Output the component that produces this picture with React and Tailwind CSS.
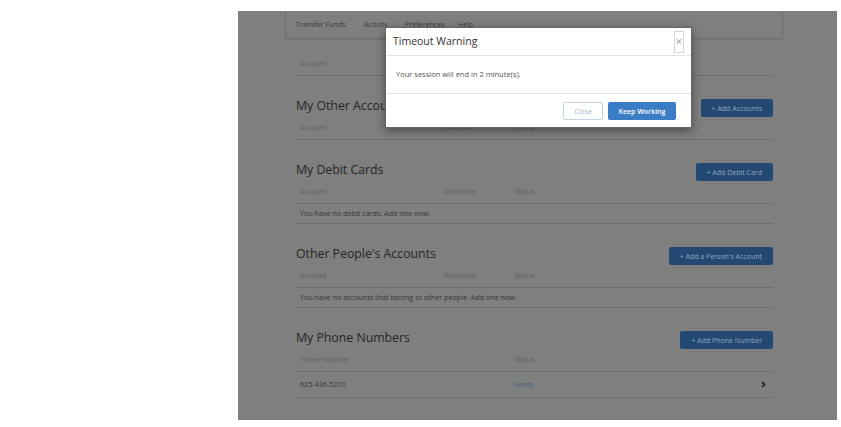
import React from "react";

function AddBtn({ children }) {
  return (
    <button className="h-[18px] self-end rounded-[2px] bg-[#234872] px-[11px] text-[7px] leading-none text-[#95a5bb]">
      {children}
    </button>
  );
}

function HeadingRow({ title, btn }) {
  return (
    <div className="flex h-[20px] justify-between">
      <h2 className="pl-px text-[12.3px] leading-[17px] text-[#262626]">{title}</h2>
      <AddBtn>{btn}</AddBtn>
    </div>
  );
}

function ColHeader({ cols }) {
  return (
    <div className="flex h-[23px] items-center border-b border-[#6c6c6c] text-[7px] text-[#5e5e5e]">
      <div className="w-[148px] pl-[5px]">{cols[0]}</div>
      <div className="w-[71px]">{cols[1]}</div>
      <div>{cols[2]}</div>
    </div>
  );
}

function EmptyRow({ text }) {
  return (
    <div className="flex h-[20px] items-center border-b border-[#6c6c6c] pl-[5px] text-[7.2px] text-[#353535]">
      {text}
    </div>
  );
}

export default function App() {
  return (
    <div className="min-h-screen bg-white font-['Open_Sans','Noto_Sans',sans-serif]">
      <div className="ml-[238px] pt-[11px]">
        <div className="relative h-[409px] w-[599px] overflow-hidden bg-[#7f7f7f]">
          {/* nav card */}
          <div className="ml-[47px] flex h-[28px] w-[498px] items-center border-x border-b border-[#6e6e6e] pl-[10px] text-[7.1px] text-[#3a3a3a] shadow-[0_1px_1px_rgba(0,0,0,0.08)]">
            <span className="w-[68px]">Transfer Funds</span>
            <span className="w-[41px]">Activity</span>
            <span className="w-[53px]">Preferences</span>
            <span>Help</span>
          </div>

          <div className="ml-[57px] w-[478px]">
            <div className="mt-[14px]">
              <ColHeader cols={["Account", "Nickname", "Status"]} />
            </div>

            <section className="mt-[21px]">
              <HeadingRow title="My Other Accounts" btn="+ Add Accounts" />
              <ColHeader cols={["Account", "Nickname", "Status"]} />
            </section>

            <section className="mt-[21px]">
              <HeadingRow title="My Debit Cards" btn="+ Add Debit Card" />
              <ColHeader cols={["Account", "Nickname", "Status"]} />
              <EmptyRow text="You have no debit cards. Add one now." />
            </section>

            <section className="mt-[21px]">
              <HeadingRow title="Other People's Accounts" btn="+ Add a Person's Account" />
              <ColHeader cols={["Account", "Nickname", "Status"]} />
              <EmptyRow text="You have no accounts that belong to other people. Add one now." />
            </section>

            <section className="mt-[21px]">
              <HeadingRow title="My Phone Numbers" btn="+ Add Phone Number" />
              <div className="flex h-[23px] items-center border-b border-[#6c6c6c] text-[7px] text-[#5e5e5e]">
                <div className="w-[219px] pl-[5px]">Phone Number</div>
                <div>Status</div>
              </div>
              <div className="flex h-[26px] items-center border-b border-[#6c6c6c] text-[7.2px]">
                <div className="w-[219px] pl-[5px] text-[#353535]">625-436-5210</div>
                <div className="flex-1 text-[#44587a]">Verify</div>
                <svg className="mr-[7px]" width="5" height="7" viewBox="0 0 5 7">
                  <path d="M1 1l2.6 2.5L1 6" stroke="#1f1f1f" strokeWidth="1.6" fill="none" />
                </svg>
              </div>
            </section>
          </div>

          {/* modal */}
          <div className="absolute left-[147px] top-[16px] flex h-[101px] w-[307px] flex-col border border-[#666] bg-white shadow-[0_3px_9px_rgba(0,0,0,0.4)]">
            <div className="flex h-[28px] items-center justify-between border-b border-[#e5e5e5] pl-[7px] pr-[7px]">
              <h3 className="text-[10.5px] text-[#333]">Timeout Warning</h3>
              <button className="flex h-[22px] w-[10px] items-center justify-center border border-[#c8d8eb] text-[12px] leading-none text-[#9a9a9a]">
                ×
              </button>
            </div>
            <div className="flex h-[37px] items-center pl-[10px] text-[7.5px] text-[#555]">
              Your session will end in 2 minute(s).
            </div>
            <div className="flex flex-1 items-start justify-end gap-[5px] border-t border-[#e5e5e5] pr-[15px] pt-[8px]">
              <button className="h-[18px] w-[40px] rounded-[2px] border border-[#c3d4e7] bg-white text-[7px] leading-none text-[#a3b3c4]">
                Close
              </button>
              <button className="h-[18px] w-[68px] rounded-[2px] bg-[#3b7dc4] text-[7px] font-semibold leading-none text-white">
                Keep Working
              </button>
            </div>
          </div>
        </div>
      </div>
    </div>
  );
}
